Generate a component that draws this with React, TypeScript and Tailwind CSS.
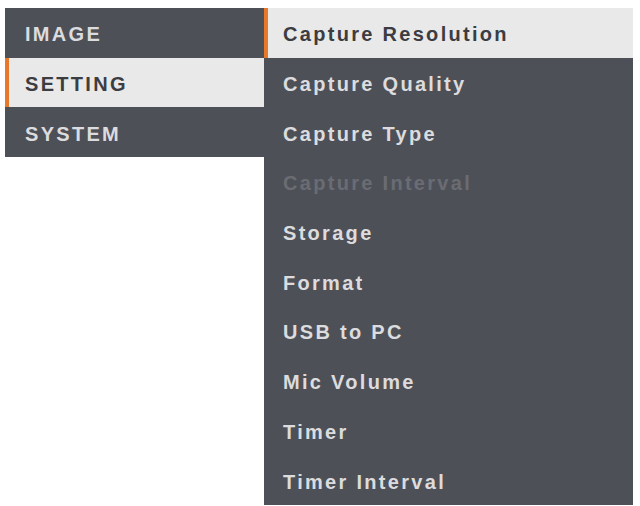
const left = [
  { label: "IMAGE", active: false },
  { label: "SETTING", active: true },
  { label: "SYSTEM", active: false },
]

const right = [
  { label: "Capture Resolution", state: "active" },
  { label: "Capture Quality", state: "normal" },
  { label: "Capture Type", state: "normal" },
  { label: "Capture Interval", state: "disabled" },
  { label: "Storage", state: "normal" },
  { label: "Format", state: "normal" },
  { label: "USB to PC", state: "normal" },
  { label: "Mic Volume", state: "normal" },
  { label: "Timer", state: "normal" },
  { label: "Timer Interval", state: "normal" },
]

export default function App() {
  return (
    <div
      className="w-[640px] h-[506px] bg-white overflow-hidden flex items-start pt-[8px] pl-[5px]"
      style={{ fontFamily: '"Liberation Sans", Arial, sans-serif' }}
    >
      {/* Category column */}
      <div className="w-[259px] bg-[#4e5058] flex flex-col">
        {left.map((item) => (
          <div
            key={item.label}
            className={
              item.active
                ? "h-[49.7px] flex items-center pt-[3px] bg-[#e9e9e9] border-l-[4px] border-[#e8782a] pl-[16px] text-[#3c3d42]"
                : "h-[49.7px] flex items-center pt-[3px] pl-[20px] text-[#dcdcde]"
            }
          >
            <span className="text-[20px] font-bold tracking-[2.3px]">{item.label}</span>
          </div>
        ))}
      </div>

      {/* Options column */}
      <div className="w-[369px] bg-[#4e5058] flex flex-col">
        {right.map((item) => (
          <div
            key={item.label}
            className={
              item.state === "active"
                ? "h-[49.7px] flex items-center pt-[3px] bg-[#e9e9e9] border-l-[4px] border-[#e8782a] pl-[15px] text-[#3c3d42]"
                : item.state === "disabled"
                  ? "h-[49.7px] flex items-center pt-[3px] pl-[19px] text-[#6a6c73]"
                  : "h-[49.7px] flex items-center pt-[3px] pl-[19px] text-[#dcdcde]"
            }
          >
            <span className="text-[20px] font-bold tracking-[2.3px]">{item.label}</span>
          </div>
        ))}
      </div>
    </div>
  )
}
